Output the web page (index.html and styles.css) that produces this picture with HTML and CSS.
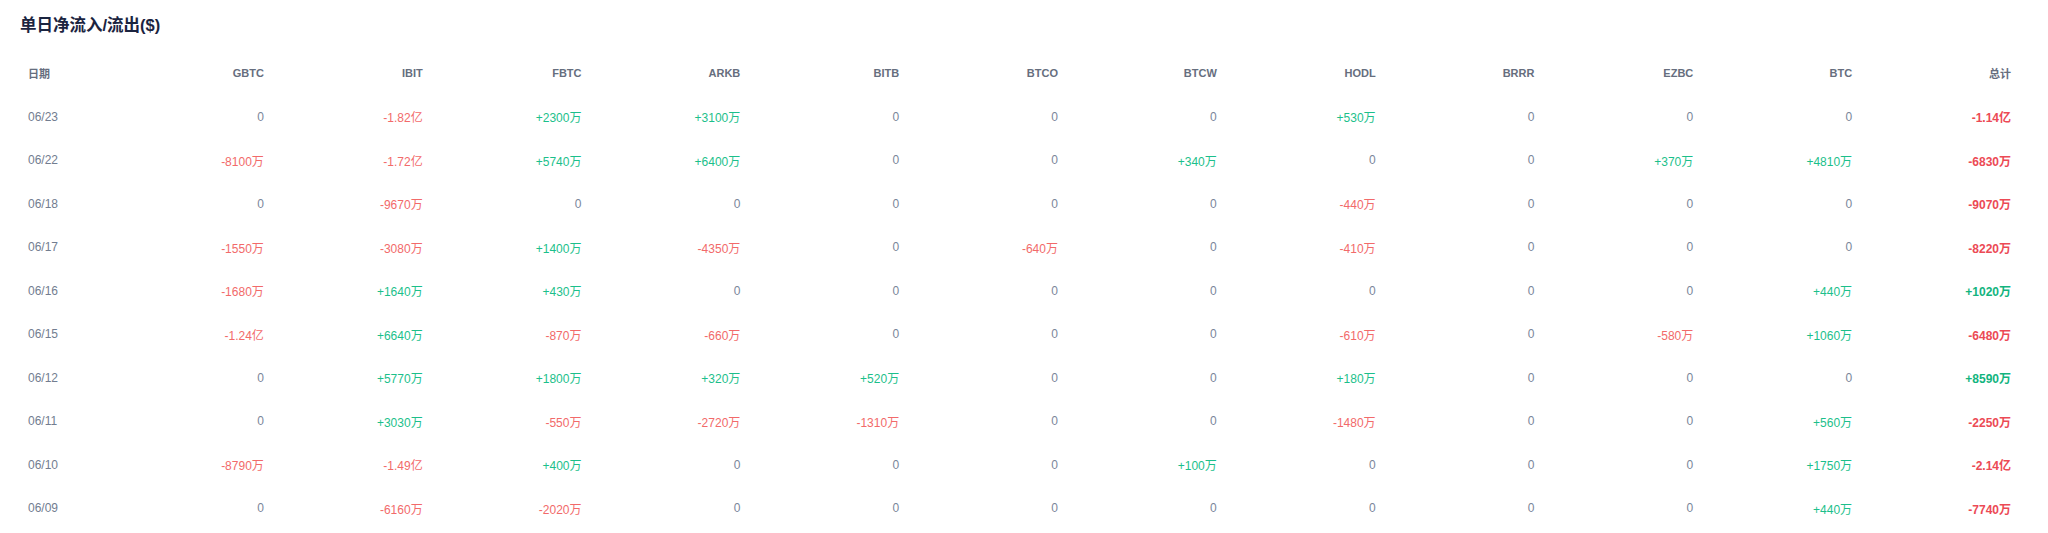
FILE: index.html
```html
<!DOCTYPE html>
<html lang="zh-CN">
<head>
<meta charset="utf-8">
<title>单日净流入/流出($)</title>
<link rel="stylesheet" href="styles.css">
</head>
<body>
<div class="wrap">
  <h2 class="title">单日净流入/流出($)</h2>
  <table class="flow">
    <colgroup><col class="c-date"><col><col><col><col><col><col><col><col><col><col><col><col></colgroup>
    <thead>
      <tr><th class="date">日期</th><th>GBTC</th><th>IBIT</th><th>FBTC</th><th>ARKB</th><th>BITB</th><th>BTCO</th><th>BTCW</th><th>HODL</th><th>BRRR</th><th>EZBC</th><th>BTC</th><th>总计</th></tr>
    </thead>
    <tbody>
      <tr><td class="date">06/23</td><td class="z">0</td><td class="n">-1.82亿</td><td class="p">+2300万</td><td class="p">+3100万</td><td class="z">0</td><td class="z">0</td><td class="z">0</td><td class="p">+530万</td><td class="z">0</td><td class="z">0</td><td class="z">0</td><td class="t n">-1.14亿</td></tr>
      <tr><td class="date">06/22</td><td class="n">-8100万</td><td class="n">-1.72亿</td><td class="p">+5740万</td><td class="p">+6400万</td><td class="z">0</td><td class="z">0</td><td class="p">+340万</td><td class="z">0</td><td class="z">0</td><td class="p">+370万</td><td class="p">+4810万</td><td class="t n">-6830万</td></tr>
      <tr><td class="date">06/18</td><td class="z">0</td><td class="n">-9670万</td><td class="z">0</td><td class="z">0</td><td class="z">0</td><td class="z">0</td><td class="z">0</td><td class="n">-440万</td><td class="z">0</td><td class="z">0</td><td class="z">0</td><td class="t n">-9070万</td></tr>
      <tr><td class="date">06/17</td><td class="n">-1550万</td><td class="n">-3080万</td><td class="p">+1400万</td><td class="n">-4350万</td><td class="z">0</td><td class="n">-640万</td><td class="z">0</td><td class="n">-410万</td><td class="z">0</td><td class="z">0</td><td class="z">0</td><td class="t n">-8220万</td></tr>
      <tr><td class="date">06/16</td><td class="n">-1680万</td><td class="p">+1640万</td><td class="p">+430万</td><td class="z">0</td><td class="z">0</td><td class="z">0</td><td class="z">0</td><td class="z">0</td><td class="z">0</td><td class="z">0</td><td class="p">+440万</td><td class="t p">+1020万</td></tr>
      <tr><td class="date">06/15</td><td class="n">-1.24亿</td><td class="p">+6640万</td><td class="n">-870万</td><td class="n">-660万</td><td class="z">0</td><td class="z">0</td><td class="z">0</td><td class="n">-610万</td><td class="z">0</td><td class="n">-580万</td><td class="p">+1060万</td><td class="t n">-6480万</td></tr>
      <tr><td class="date">06/12</td><td class="z">0</td><td class="p">+5770万</td><td class="p">+1800万</td><td class="p">+320万</td><td class="p">+520万</td><td class="z">0</td><td class="z">0</td><td class="p">+180万</td><td class="z">0</td><td class="z">0</td><td class="z">0</td><td class="t p">+8590万</td></tr>
      <tr><td class="date">06/11</td><td class="z">0</td><td class="p">+3030万</td><td class="n">-550万</td><td class="n">-2720万</td><td class="n">-1310万</td><td class="z">0</td><td class="z">0</td><td class="n">-1480万</td><td class="z">0</td><td class="z">0</td><td class="p">+560万</td><td class="t n">-2250万</td></tr>
      <tr><td class="date">06/10</td><td class="n">-8790万</td><td class="n">-1.49亿</td><td class="p">+400万</td><td class="z">0</td><td class="z">0</td><td class="z">0</td><td class="p">+100万</td><td class="z">0</td><td class="z">0</td><td class="z">0</td><td class="p">+1750万</td><td class="t n">-2.14亿</td></tr>
      <tr><td class="date">06/09</td><td class="z">0</td><td class="n">-6160万</td><td class="n">-2020万</td><td class="z">0</td><td class="z">0</td><td class="z">0</td><td class="z">0</td><td class="z">0</td><td class="z">0</td><td class="z">0</td><td class="p">+440万</td><td class="t n">-7740万</td></tr>
    </tbody>
  </table>
</div>
</body>
</html>
```
FILE: styles.css
```css
html, body {
  margin: 0;
  padding: 0;
  background: #ffffff;
}
body {
  font-family: "Liberation Sans", "Noto Sans CJK SC", sans-serif;
  color: #6b7688;
}
.wrap {
  padding: 15px 29px 0 20px;
}
.title {
  margin: 0;
  font-size: 16.5px;
  line-height: 20px;
  font-weight: 700;
  color: #1b2440;
}
.flow {
  margin-top: 16.5px;
  width: 100%;
  border-collapse: collapse;
  table-layout: fixed;
}
.c-date {
  width: 93px;
}
.flow tr {
  height: 43.5px;
}
.flow th,
.flow td {
  padding: 0 8px;
  text-align: right;
  white-space: nowrap;
  vertical-align: middle;
}
.flow th {
  font-size: 11px;
  font-weight: 700;
  color: #666e7e;
}
.flow td {
  font-size: 12px;
  color: #7a869a;
}
.flow .date {
  text-align: left;
}
.flow td.date {
  color: #727d90;
}
.flow td.n {
  color: #f26a6a;
}
.flow td.p {
  color: #1cbf8b;
}
.flow td.t {
  font-weight: 700;
}
.flow td.t.n {
  color: #ec4a55;
}
.flow td.t.p {
  color: #12b47e;
}
```
